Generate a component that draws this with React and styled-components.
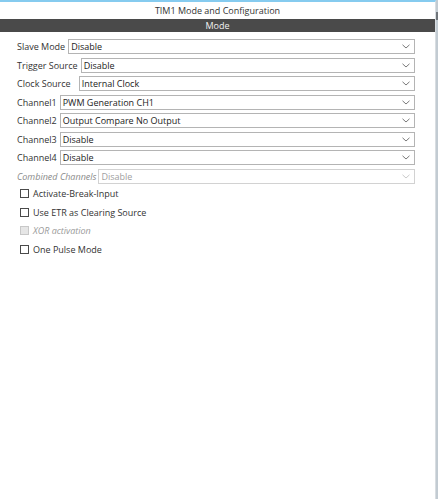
import React from "react";
import styled, { createGlobalStyle } from "styled-components";

const Global = createGlobalStyle`
  html, body { margin: 0; padding: 0; background: #ffffff; }
  body { font-family: "Open Sans", "Noto Sans", sans-serif; }
`;

const Frame = styled.div`
  display: flex;
  width: 438px;
  height: 499px;
  background: #fff;
`;

const Panel = styled.div`
  flex: 1;
  display: flex;
  flex-direction: column;
  border-top: 2px solid #86cbef;
  border-right: 1px solid #d8dde1;
`;

const Strip = styled.div`
  width: 2px;
  background: #c2cbd2;
  display: flex;
  flex-direction: column;
`;

const Thumb = styled.div`
  margin-top: 12px;
  height: 8px;
  background: #6f757a;
`;

const Title = styled.div`
  height: 17px;
  display: flex;
  align-items: center;
  justify-content: center;
  font-size: 9px;
  color: #333;
`;

const ModeBar = styled.div`
  height: 13px;
  background: #4a4a4a;
  color: #f2f2f2;
  font-size: 9px;
  display: flex;
  align-items: center;
  justify-content: center;
`;

const Form = styled.div`
  display: flex;
  flex-direction: column;
  gap: 3.55px;
  padding: 7px 20px 0 17px;
`;

const Row = styled.div`
  display: flex;
  align-items: center;
  height: 15px;
`;

const Label = styled.span`
  font-size: 9px;
  color: ${p => (p.$disabled ? "#8a8a8a" : "#333")};
  font-style: ${p => (p.$disabled ? "italic" : "normal")};
  margin-right: ${p => p.$gap}px;
  white-space: nowrap;
`;

const Select = styled.div`
  flex: 1;
  height: 15px;
  box-sizing: border-box;
  border: 1px solid ${p => (p.$disabled ? "#d2d2d2" : "#b4b4b4")};
  display: flex;
  align-items: center;
  padding: 0 4px 0 2px;
  font-size: 9px;
  color: ${p => (p.$disabled ? "#a0a0a0" : "#222")};
  background: #fff;
`;

const Value = styled.span`
  flex: 1;
  white-space: nowrap;
`;

const Checks = styled.div`
  display: flex;
  flex-direction: column;
  gap: 6.4px;
  padding: 4px 0 0 20px;
`;

const CheckRow = styled.div`
  display: flex;
  align-items: center;
  height: 12px;
  gap: 4px;
`;

const Box = styled.span`
  width: 9px;
  height: 9px;
  box-sizing: border-box;
  border: 1px solid ${p => (p.$disabled ? "#c8c8c8" : "#4a4a4a")};
  background: ${p => (p.$disabled ? "#e6e6e6" : "#fff")};
`;

const CheckText = styled.span`
  font-size: 9px;
  color: ${p => (p.$disabled ? "#999" : "#333")};
  font-style: ${p => (p.$disabled ? "italic" : "normal")};
`;

const Chevron = ({ disabled }) => (
  <svg width="8" height="5" viewBox="0 0 8 5">
    <path d="M0.5 0.8 L4 4 L7.5 0.8" fill="none" stroke={disabled ? "#c4c4c4" : "#6a6a6a"} strokeWidth="0.9" />
  </svg>
);

const rows = [
  { label: "Slave Mode", value: "Disable", gap: 3 },
  { label: "Trigger Source", value: "Disable", gap: 3 },
  { label: "Clock Source", value: "Internal Clock", gap: 8 },
  { label: "Channel1", value: "PWM Generation CH1", gap: 3 },
  { label: "Channel2", value: "Output Compare No Output", gap: 3 },
  { label: "Channel3", value: "Disable", gap: 3 },
  { label: "Channel4", value: "Disable", gap: 3 },
  { label: "Combined Channels", value: "Disable", gap: 2, disabled: true },
];

const checks = [
  { label: "Activate-Break-Input" },
  { label: "Use ETR as Clearing Source" },
  { label: "XOR activation", disabled: true },
  { label: "One Pulse Mode" },
];

export default function App() {
  return (
    <>
      <Global />
      <Frame>
        <Panel>
          <Title>TIM1 Mode and Configuration</Title>
          <ModeBar>Mode</ModeBar>
          <Form>
            {rows.map(r => (
              <Row key={r.label}>
                <Label $disabled={r.disabled} $gap={r.gap}>{r.label}</Label>
                <Select $disabled={r.disabled}>
                  <Value>{r.value}</Value>
                  <Chevron disabled={r.disabled} />
                </Select>
              </Row>
            ))}
          </Form>
          <Checks>
            {checks.map(c => (
              <CheckRow key={c.label}>
                <Box $disabled={c.disabled} />
                <CheckText $disabled={c.disabled}>{c.label}</CheckText>
              </CheckRow>
            ))}
          </Checks>
        </Panel>
        <Strip>
          <Thumb />
        </Strip>
      </Frame>
    </>
  );
}
